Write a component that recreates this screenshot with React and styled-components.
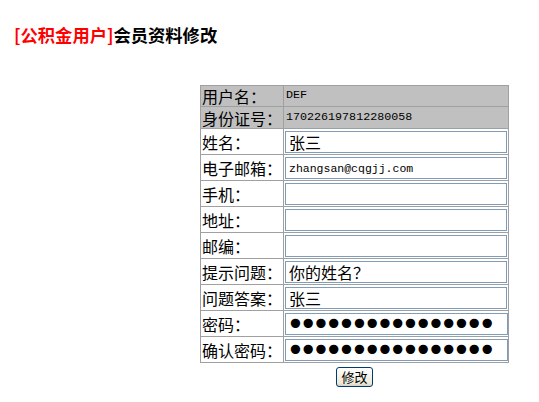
import React from 'react'
import styled, { createGlobalStyle } from 'styled-components'

const GlobalStyle = createGlobalStyle`
    body {
        margin: 0;
        background: #ffffff;
        font-family: "Noto Sans CJK SC", "Liberation Sans", sans-serif;
        color: #000;
    }
`

const rows = [
    { label: '姓名：', value: '张三' },
    { label: '电子邮箱：', value: 'zhangsan@cqgjj.com', mono: true },
    { label: '手机：', value: '' },
    { label: '地址：', value: '' },
    { label: '邮编：', value: '' },
    { label: '提示问题：', value: '你的姓名？' },
    { label: '问题答案：', value: '张三' },
    { label: '密码：', value: 'abcdefghijklmnop', password: true },
    { label: '确认密码：', value: 'abcdefghijklmnop', password: true },
]

export default function App() {
    return (
        <Page>
            <GlobalStyle />
            <Title>
                <Tag>[公积金用户]</Tag>会员资料修改
            </Title>
            <Form onSubmit={e => e.preventDefault()}>
                <Grid>
                    <Label shaded>用户名：</Label>
                    <Value shaded>DEF</Value>
                    <Label shaded tall>身份证号：</Label>
                    <Value shaded tall>170226197812280058</Value>
                    {rows.map(r => (
                        <React.Fragment key={r.label}>
                            <Label field>{r.label}</Label>
                            <Value field>
                                <Field
                                    type={r.password ? 'password' : 'text'}
                                    defaultValue={r.value}
                                    $mono={r.mono}
                                    $password={r.password}
                                />
                            </Value>
                        </React.Fragment>
                    ))}
                </Grid>
                <Actions>
                    <Submit type="submit">修改</Submit>
                </Actions>
            </Form>
        </Page>
    )
}

const Page = styled.div`
    padding: 25px 0 0 14px;
`

const Title = styled.div`
    font-size: 17.3px;
    font-weight: bold;
    line-height: 20px;
    height: 20px;
    white-space: nowrap;
`

const Tag = styled.span`
    color: #ff0000;
`

const Form = styled.form`
    width: 309px;
    margin: 40px 0 0 186px;
`

const Grid = styled.div`
    display: grid;
    grid-template-columns: 83px 225px;
    border-top: 1px solid #a0a0a0;
    border-left: 1px solid #a0a0a0;
`

const Cell = styled.div.withConfig({
    shouldForwardProp: p => !['shaded', 'tall', 'field'].includes(p),
})`
    box-sizing: border-box;
    border-right: 1px solid #a0a0a0;
    border-bottom: 1px solid #a0a0a0;
    background: ${p => (p.shaded ? '#c0c0c0' : '#ffffff')};
    height: ${p => (p.field ? '26px' : p.tall ? '22px' : '21px')};
    display: flex;
    align-items: center;
    white-space: nowrap;
    line-height: 1;
`

const Label = styled(Cell)`
    font-size: 16px;
    padding-left: 1px;
`

const Value = styled(Cell)`
    padding: 0 1px 0 2px;
    font-family: "Liberation Mono", monospace;
    font-size: 11.7px;
`

const Field = styled.input.withConfig({
    shouldForwardProp: p => !['$mono', '$password'].includes(p),
})`
    box-sizing: border-box;
    width: 223px;
    height: 22px;
    margin: 1px 0 0 -1px;
    padding: 0 ${p => (p.$password ? '0 0 0' : '3px')};
    border: 1px solid #7f9db9;
    outline: none;
    background: #fff;
    color: #000;
    font-family: ${p => (p.$mono ? '"Liberation Mono", monospace' : p.$password ? '"DejaVu Sans", sans-serif' : '"Noto Sans CJK SC", sans-serif')};
    font-size: ${p => (p.$mono ? '11.5px' : p.$password ? '32px' : '16px')};
    letter-spacing: ${p => (p.$password ? '-6.1px' : '0')};
`

const Actions = styled.div`
    display: flex;
    justify-content: center;
    padding-top: 4px;
`

const Submit = styled.button`
    box-sizing: border-box;
    width: 37px;
    height: 20px;
    padding: 0;
    border: 1px solid #003c74;
    border-radius: 3px;
    background: linear-gradient(#ffffff, #ece9d8 85%, #d6d0c5);
    font-family: "Noto Sans CJK SC", sans-serif;
    font-size: 13px;
    line-height: 18px;
    color: #000;
    cursor: pointer;
`
